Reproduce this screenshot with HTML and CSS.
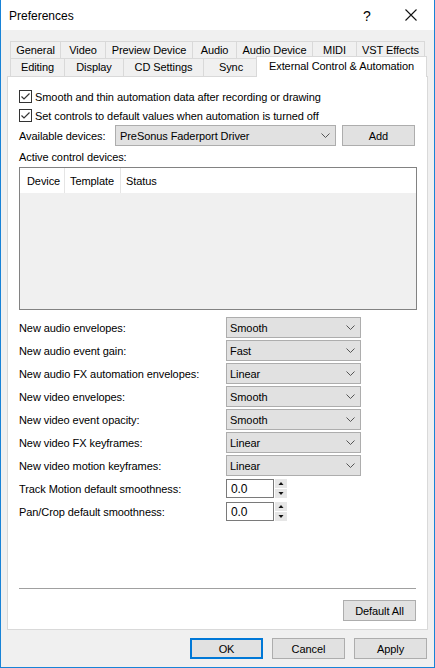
FILE: index.html
```html
<!DOCTYPE html>
<html>
<head>
<meta charset="utf-8">
<title>Preferences</title>
<link rel="stylesheet" href="styles.css">
</head>
<body>
<div class="window">
  <div class="titlebar">
    <span class="title">Preferences</span>
    <span class="help">?</span>
    <span class="close"><svg width="12" height="12" viewBox="0 0 12 12"><path d="M0.5 0.5 L11.5 11.5 M11.5 0.5 L0.5 11.5" stroke="#111" stroke-width="1.1" fill="none"/></svg></span>
  </div>
  <div class="body">
    <div class="tabs">
      <div class="tabrow">
        <div class="tab w-general">General</div>
        <div class="tab w-video">Video</div>
        <div class="tab w-preview">Preview Device</div>
        <div class="tab w-audio">Audio</div>
        <div class="tab w-adev">Audio Device</div>
        <div class="tab w-midi">MIDI</div>
        <div class="tab w-vst">VST Effects</div>
      </div>
      <div class="tabrow row2">
        <div class="tab w-editing">Editing</div>
        <div class="tab w-display">Display</div>
        <div class="tab w-cd">CD Settings</div>
        <div class="tab w-sync">Sync</div>
        <div class="tab selected">External Control &amp; Automation</div>
      </div>
    </div>
    <div class="panel">
      <div class="checkrow">
        <span class="checkbox"><svg width="13" height="13" viewBox="0 0 13 13"><rect x="0.5" y="0.5" width="12" height="12" fill="#fff" stroke="#333"/><path d="M2.5 6.5 L5 9 L10.5 3.5" stroke="#333" stroke-width="1.2" fill="none"/></svg></span>
        <span>Smooth and thin automation data after recording or drawing</span>
      </div>
      <div class="checkrow">
        <span class="checkbox"><svg width="13" height="13" viewBox="0 0 13 13"><rect x="0.5" y="0.5" width="12" height="12" fill="#fff" stroke="#333"/><path d="M2.5 6.5 L5 9 L10.5 3.5" stroke="#333" stroke-width="1.2" fill="none"/></svg></span>
        <span>Set controls to default values when automation is turned off</span>
      </div>
      <div class="devrow">
        <span class="devlabel">Available devices:</span>
        <div class="combo devcombo"><span>PreSonus Faderport Driver</span><svg class="chev" width="9" height="5" viewBox="0 0 9 5"><path d="M0.5 0.5 L4.5 4.5 L8.5 0.5" stroke="#555" fill="none"/></svg></div>
        <div class="btn addbtn">Add</div>
      </div>
      <div class="sectionlabel">Active control devices:</div>
      <div class="listbox">
        <div class="listhead">
          <span class="col c1">Device</span>
          <span class="col c2">Template</span>
          <span class="col c3">Status</span>
        </div>
      </div>
      <div class="settings">
        <div class="srow"><span class="slabel">New audio envelopes:</span><div class="combo scombo"><span>Smooth</span><svg class="chev" width="9" height="5" viewBox="0 0 9 5"><path d="M0.5 0.5 L4.5 4.5 L8.5 0.5" stroke="#555" fill="none"/></svg></div></div>
        <div class="srow"><span class="slabel">New audio event gain:</span><div class="combo scombo"><span>Fast</span><svg class="chev" width="9" height="5" viewBox="0 0 9 5"><path d="M0.5 0.5 L4.5 4.5 L8.5 0.5" stroke="#555" fill="none"/></svg></div></div>
        <div class="srow"><span class="slabel">New audio FX automation envelopes:</span><div class="combo scombo"><span>Linear</span><svg class="chev" width="9" height="5" viewBox="0 0 9 5"><path d="M0.5 0.5 L4.5 4.5 L8.5 0.5" stroke="#555" fill="none"/></svg></div></div>
        <div class="srow"><span class="slabel">New video envelopes:</span><div class="combo scombo"><span>Smooth</span><svg class="chev" width="9" height="5" viewBox="0 0 9 5"><path d="M0.5 0.5 L4.5 4.5 L8.5 0.5" stroke="#555" fill="none"/></svg></div></div>
        <div class="srow"><span class="slabel">New video event opacity:</span><div class="combo scombo"><span>Smooth</span><svg class="chev" width="9" height="5" viewBox="0 0 9 5"><path d="M0.5 0.5 L4.5 4.5 L8.5 0.5" stroke="#555" fill="none"/></svg></div></div>
        <div class="srow"><span class="slabel">New video FX keyframes:</span><div class="combo scombo"><span>Linear</span><svg class="chev" width="9" height="5" viewBox="0 0 9 5"><path d="M0.5 0.5 L4.5 4.5 L8.5 0.5" stroke="#555" fill="none"/></svg></div></div>
        <div class="srow"><span class="slabel">New video motion keyframes:</span><div class="combo scombo"><span>Linear</span><svg class="chev" width="9" height="5" viewBox="0 0 9 5"><path d="M0.5 0.5 L4.5 4.5 L8.5 0.5" stroke="#555" fill="none"/></svg></div></div>
        <div class="srow"><span class="slabel">Track Motion default smoothness:</span><div class="spinput">0.0</div><div class="spinner"><svg width="12" height="19" viewBox="0 0 12 19"><rect x="0" y="0" width="12" height="9" fill="#e6e6e6"/><rect x="0" y="10" width="12" height="9" fill="#e6e6e6"/><path d="M6 3 L8.5 6 L3.5 6 Z" fill="#111"/><path d="M3.5 13 L8.5 13 L6 16 Z" fill="#111"/></svg></div></div>
        <div class="srow"><span class="slabel">Pan/Crop default smoothness:</span><div class="spinput">0.0</div><div class="spinner"><svg width="12" height="19" viewBox="0 0 12 19"><rect x="0" y="0" width="12" height="9" fill="#e6e6e6"/><rect x="0" y="10" width="12" height="9" fill="#e6e6e6"/><path d="M6 3 L8.5 6 L3.5 6 Z" fill="#111"/><path d="M3.5 13 L8.5 13 L6 16 Z" fill="#111"/></svg></div></div>
      </div>
      <div class="bottom">
        <div class="sep"></div>
        <div class="btn defbtn">Default All</div>
      </div>
    </div>
    <div class="footer">
      <div class="btn fbtn ok">OK</div>
      <div class="btn fbtn">Cancel</div>
      <div class="btn fbtn">Apply</div>
    </div>
  </div>
</div>
</body>
</html>
```
FILE: styles.css
```css
html, body {
  margin: 0;
  padding: 0;
  background: #ffffff;
}
body {
  font-family: "Liberation Sans", Arial, sans-serif;
  font-size: 11px;
  letter-spacing: -0.08px;
  color: #000;
}
.window {
  width: 435px;
  height: 668px;
  box-sizing: border-box;
  border-left: 1px solid #1883d7;
  border-right: 1px solid #1883d7;
  border-bottom: 1px solid #1883d7;
  display: flex;
  flex-direction: column;
  overflow: hidden;
}
.titlebar {
  height: 30px;
  background: #ffffff;
  display: flex;
  align-items: center;
  flex-shrink: 0;
}
.title {
  font-size: 12px;
  letter-spacing: 0;
  margin-left: 8px;
  flex: 1;
  padding-top: 1px;
}
.help {
  font-size: 14px;
  width: 12px;
  margin-right: 30px;
  padding-top: 1px;
}
.close {
  width: 12px;
  height: 12px;
  margin-right: 17px;
  display: flex;
}
.body {
  flex: 1;
  background: #f0f0f0;
  padding: 11px 6px 0 6px;
  display: flex;
  flex-direction: column;
}
.tabs {
  padding-left: 3px;
}
.tabrow {
  display: flex;
  height: 17px;
}
.tabrow.row2 {
  height: 18px;
}
.tab {
  box-sizing: border-box;
  border: 1px solid #d9d9d9;
  border-bottom: none;
  background: #f0f0f0;
  text-align: center;
  line-height: 16px;
  white-space: nowrap;
  margin-left: -1px;
}
.tab:first-child {
  margin-left: 0;
}
.row2 .tab {
  line-height: 17px;
}
.w-general { width: 51px; }
.w-video { width: 46px; }
.w-preview { width: 88px; }
.w-audio { width: 45px; }
.w-adev { width: 77px; }
.w-midi { width: 45px; }
.w-vst { width: 69px; }
.w-editing { width: 55px; }
.w-display { width: 60px; }
.w-cd { width: 81px; }
.w-sync { width: 56px; }
.tab.selected {
  position: relative;
  z-index: 2;
  width: 171px;
  height: 21px;
  margin-top: -2px;
  margin-left: -3px;
  background: #ffffff;
  line-height: 18px;
}
.panel {
  height: 554px;
  box-sizing: border-box;
  background: #ffffff;
  border: 1px solid #d9d9d9;
  padding: 10px 10px 8px 11px;
  display: flex;
  flex-direction: column;
}
.checkrow {
  height: 19px;
  display: flex;
  align-items: center;
}
.checkbox {
  width: 13px;
  height: 13px;
  display: flex;
  margin-right: 3px;
}
.devrow {
  height: 21px;
  display: flex;
  align-items: center;
}
.devlabel {
  width: 96px;
}
.combo {
  box-sizing: border-box;
  height: 21px;
  background: #e1e1e1;
  border: 1px solid #adadad;
  display: flex;
  align-items: center;
  padding: 0 4px 0 3px;
}
.combo span {
  flex: 1;
}
.chev {
  margin-right: 1px;
}
.devcombo {
  width: 221px;
  padding-left: 4px;
}
.btn {
  box-sizing: border-box;
  height: 21px;
  background: #e1e1e1;
  border: 1px solid #adadad;
  display: flex;
  align-items: center;
  justify-content: center;
}
.addbtn {
  width: 73px;
  margin-left: 6px;
}
.sectionlabel {
  height: 21px;
  display: flex;
  align-items: center;
}
.listbox {
  box-sizing: border-box;
  height: 143px;
  width: 398px;
  border: 1px solid #828282;
  background: #f0f0f0;
}
.listhead {
  height: 25px;
  background: #ffffff;
  display: flex;
  align-items: center;
}
.col {
  box-sizing: border-box;
  height: 25px;
  display: flex;
  align-items: center;
  padding-left: 7px;
  border-right: 1px solid #e5e5e5;
}
.c1 { width: 45px; }
.c2 { width: 56px; padding-left: 5px; }
.c3 { border-right: none; padding-left: 5px; }
.settings {
  margin-top: 5px;
}
.srow {
  height: 21px;
  margin-top: 2px;
  display: flex;
  align-items: center;
}
.slabel {
  width: 207px;
}
.scombo {
  width: 135px;
}
.spinput {
  box-sizing: border-box;
  width: 48px;
  height: 19px;
  border: 1px solid #7a7a7a;
  background: #ffffff;
  display: flex;
  align-items: center;
  padding-left: 4px;
  font-size: 12px;
}
.spinner {
  width: 12px;
  height: 19px;
  margin-left: 1px;
  display: flex;
}
.bottom {
  margin-top: auto;
  display: flex;
  flex-direction: column;
  align-items: flex-end;
}
.sep {
  align-self: stretch;
  height: 1px;
  background: #a0a0a0;
  margin-right: 1px;
  margin-bottom: 11px;
}
.defbtn {
  width: 73px;
  margin-right: 1px;
}
.footer {
  display: flex;
  justify-content: flex-end;
  gap: 9px;
  padding-top: 8px;
  padding-right: 1px;
}
.fbtn {
  width: 73px;
  height: 21px;
}
.fbtn.ok {
  border: 2px solid #0078d7;
}
```
